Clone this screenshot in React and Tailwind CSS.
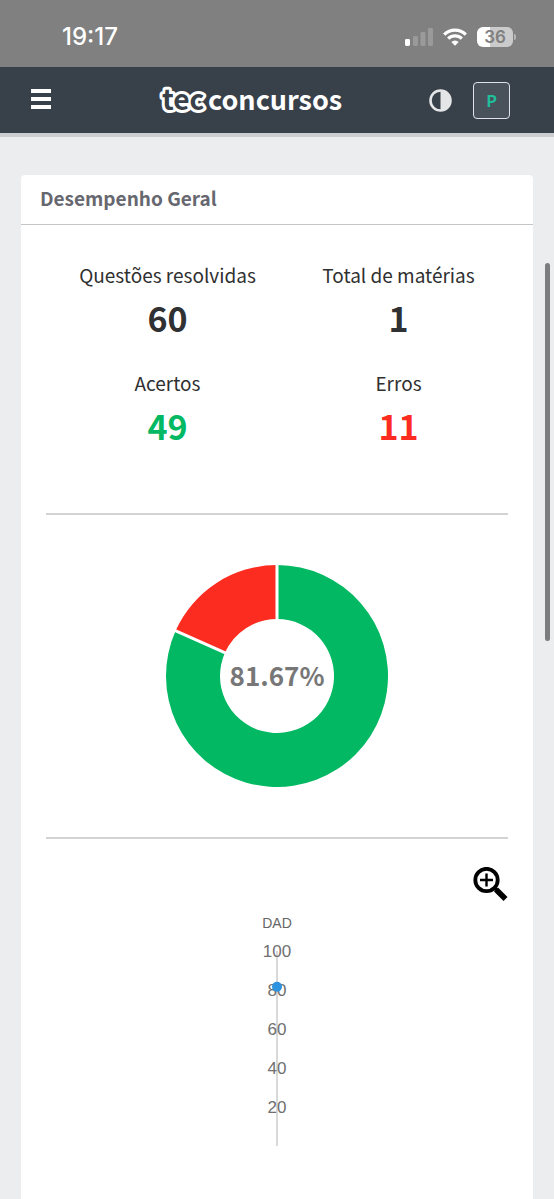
import React from 'react';

const stats = [
  { label: 'Questões resolvidas', value: 60, color: 'text-[#2f3132]' },
  { label: 'Total de matérias', value: 1, color: 'text-[#2f3132]' },
  { label: 'Acertos', value: 49, color: 'text-[#02b863]' },
  { label: 'Erros', value: 11, color: 'text-[#fd2c20]' },
];

const ticks = [100, 80, 60, 40, 20];

function StatusBar() {
  return (
    <div className="flex h-[67px] items-center justify-between bg-[#808080] pr-[38px] pl-[62px] pt-[7px] text-white">
      <span className="font-['Inter',sans-serif] text-[24px] leading-7 font-medium">19:17</span>
      <div className="flex items-center gap-[10px]">
        <svg width="28" height="20" viewBox="0 0 28 20" aria-label="Sinal">
          <rect x="0" y="12" width="5" height="7" rx="1.4" fill="#fff" />
          <rect x="8" y="9" width="5" height="10" rx="1.4" fill="#9a9a9a" />
          <rect x="15.5" y="5" width="5" height="14" rx="1.4" fill="#9a9a9a" />
          <rect x="23" y="1" width="5" height="18" rx="1.4" fill="#9a9a9a" />
        </svg>
        <svg width="24" height="18" viewBox="0 0 24 18" aria-label="Wi-Fi">
          <g fill="none" stroke="#fff" strokeWidth="3.2">
            <path d="M1.2 6.6a15.4 15.4 0 0 1 21.6 0" />
            <path d="M5.2 10.7a9.7 9.7 0 0 1 13.6 0" />
          </g>
          <path d="M8.3 14a5.3 5.3 0 0 1 7.4 0L12 17.8z" fill="#fff" />
        </svg>
        <div className="flex items-center gap-px">
          <div className="flex h-5 w-9 items-center justify-center rounded-[6px] bg-linear-to-r from-white from-36% to-[#cbcbcb] to-36% font-['Inter',sans-serif] text-[17px] leading-5 font-semibold text-[#808080]">
            36
          </div>
          <div className="h-[6px] w-[2px] rounded-r-full bg-[#b5b5b5]" />
        </div>
      </div>
    </div>
  );
}

function Logo() {
  return (
    <svg width="190" height="48" viewBox="0 0 190 48" role="img" aria-label="tecconcursos">
      <g fontFamily="'Noto Sans CJK SC', sans-serif" fontWeight="700">
        <text
          x="5"
          y="34"
          fontSize="28"
          fill="#384049"
          stroke="#fff"
          strokeWidth="6"
          strokeLinejoin="round"
          paintOrder="stroke"
        >
          tec
        </text>
        <text x="51" y="34" fontSize="27" fill="#fff">
          concursos
        </text>
      </g>
    </svg>
  );
}

function Header() {
  return (
    <header className="flex h-[70px] items-center border-b-4 border-[#cbcdd1] bg-[#384049] pr-[44px] pl-[31px]">
      <button type="button" aria-label="Menu" className="mb-[2px] flex w-5 flex-col gap-1">
        <span className="h-1 bg-white" />
        <span className="h-1 bg-white" />
        <span className="h-1 bg-white" />
      </button>
      <a href="#" className="ml-[106px]">
        <Logo />
      </a>
      <div className="ml-auto flex items-center gap-[21px]">
        <button type="button" aria-label="Alternar contraste">
          <svg width="23" height="23" viewBox="0 0 23 23">
            <circle cx="11.5" cy="11.5" r="10" fill="none" stroke="#e4e5e7" strokeWidth="2.6" />
            <path d="M11.5 1.5a10 10 0 0 1 0 20z" fill="#e4e5e7" />
          </svg>
        </button>
        <button
          type="button"
          aria-label="Perfil P"
          className="size-[37px] rounded-[4px] border border-[#dfe3e9] bg-[#49515b] font-['Noto_Sans_CJK_SC',sans-serif] text-[16px] leading-5 font-bold text-[#1fbf9c]"
        >
          P
        </button>
      </div>
    </header>
  );
}

function Donut({ correct, total }) {
  const ratio = correct / total;
  const angle = ratio * 2 * Math.PI;
  const point = (r, a) => `${111 + r * Math.sin(a)} ${111 - r * Math.cos(a)}`;
  const slice = (from, to, large) =>
    `M${point(111, from)}A111 111 0 ${large} 1 ${point(111, to)}L${point(57, to)}A57 57 0 ${large} 0 ${point(57, from)}Z`;

  return (
    <svg className="mx-auto block" width="222" height="222" viewBox="0 0 222 222" role="img" aria-label="Aproveitamento">
      <path d={slice(0, angle, 1)} fill="#02b863" />
      <path d={slice(angle, 2 * Math.PI, 0)} fill="#fd2c20" />
      {/* separators between the slices */}
      <path
        d={`M${point(56, 0)}L${point(112, 0)}M${point(56, angle)}L${point(112, angle)}`}
        stroke="#fff"
        strokeWidth="3"
      />
      <text
        x="111"
        y="121"
        textAnchor="middle"
        fontFamily="'Noto Sans CJK SC', sans-serif"
        fontSize="26"
        fontWeight="700"
        fill="#777"
      >
        {(ratio * 100).toFixed(2)}%
      </text>
    </svg>
  );
}

function SubjectChart({ value }) {
  const scale = (v) => 42 + (100 - v) * 1.95;

  return (
    <svg
      className="mx-auto mt-[6px] block font-['Liberation_Sans',sans-serif]"
      width="100"
      height="240"
      viewBox="0 0 100 240"
      role="img"
      aria-label="Desempenho por matéria"
    >
      <rect x="49" y={scale(100)} width="2" height="195" fill="#d9d9d9" />
      <text x="50" y="19" textAnchor="middle" fontSize="14" fill="#666">
        DAD
      </text>
      {ticks.map((t) => (
        <text key={t} x="50" y={scale(t) + 6} textAnchor="middle" fontSize="17" fill="#707070">
          {t}
        </text>
      ))}
      <circle cx="50" cy={scale(value)} r="5" fill="#2c93e0" />
    </svg>
  );
}

function ZoomIcon() {
  return (
    <svg width="36" height="36" viewBox="0 0 36 36" fill="none" stroke="#000">
      <circle cx="13.5" cy="13" r="11.2" strokeWidth="3.8" />
      <path d="M13.5 6.5v13M7 13h13" strokeWidth="2.4" />
      <path d="M20.5 20l4 4" strokeWidth="3.4" />
      <path d="M23 22.5l9.5 9.5" strokeWidth="5.6" />
    </svg>
  );
}

export default function App() {
  return (
    <div className="relative flex min-h-screen flex-col bg-[#ecedef] font-['Noto_Sans_CJK_SC',sans-serif]">
      <StatusBar />
      <Header />
      <main className="flex flex-1 flex-col px-[21px] pt-[38px]">
        <section className="flex-1 rounded-t-[4px] bg-white">
          <h1 className="border-b border-[#c4c5c8] px-[19px] pt-[10px] pb-[14px] text-[19px] leading-[25px] font-bold text-[#66676f]">
            Desempenho Geral
          </h1>
          <dl className="grid grid-cols-2 gap-y-[22px] pt-[34px] pr-[19px] pb-[60px] pl-[31px] text-center">
            {stats.map((s) => (
              <div key={s.label}>
                <dt className="text-[19px] leading-8 text-[#303030]">{s.label}</dt>
                <dd className={`text-[34px] leading-[54px] font-bold ${s.color}`}>{s.value}</dd>
              </div>
            ))}
          </dl>
          <div className="mx-[25px] border-y-2 border-[#d3d3d3] py-[50px]">
            <Donut correct={49} total={60} />
          </div>
          <div className="flex justify-end pt-[28px] pr-[24px]">
            <button type="button" aria-label="Ampliar gráfico">
              <ZoomIcon />
            </button>
          </div>
          <SubjectChart value={81.67} />
        </section>
      </main>
      <div className="absolute top-[263px] right-[4px] h-[378px] w-[5px] rounded-full bg-[#7d7d7f]" />
    </div>
  );
}
